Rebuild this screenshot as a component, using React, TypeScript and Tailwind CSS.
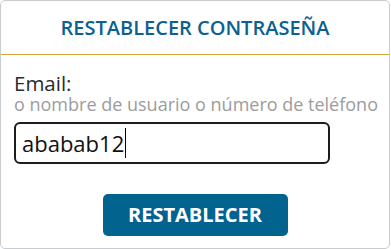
import React from 'react';

const font = { fontFamily: '"Open Sans", "Noto Sans", sans-serif' };

export default function App() {
  return (
    <div className="w-[391px] h-[249px] bg-white" style={font}>
      <div className="w-[390px] h-[249px] border border-[#c9cccf] rounded-[5px] bg-white flex flex-col">
        <div className="h-[54px] border-b border-[#d4a53c] flex items-center justify-center">
          <h1 className="text-[20px] font-semibold text-[#0b6190]">RESTABLECER CONTRASEÑA</h1>
        </div>
        <div className="flex flex-col pl-[13px] pt-[17px]">
          <label className="text-[20.5px] leading-[22px] text-[#2b2b2b]">Email:</label>
          <span className="text-[18px] leading-[20px] text-[#9c9c9c] whitespace-nowrap">o nombre de usuario o número de teléfono</span>
          <div className="mt-[8px] w-[316px] h-[42px] border-2 border-[#1c1c1c] rounded-[6px] flex items-center pl-[6px]">
            <span className="text-[22px] text-[#111]">ababab12</span>
            <span className="w-px h-[30px] bg-black ml-[1px]"></span>
          </div>
          <div className="flex justify-center mt-[30px] pr-[13px]">
            <button className="w-[185px] h-[42px] rounded-[5px] bg-[#03638f] text-white text-[20px] font-bold">RESTABLECER</button>
          </div>
        </div>
      </div>
    </div>
  );
}
